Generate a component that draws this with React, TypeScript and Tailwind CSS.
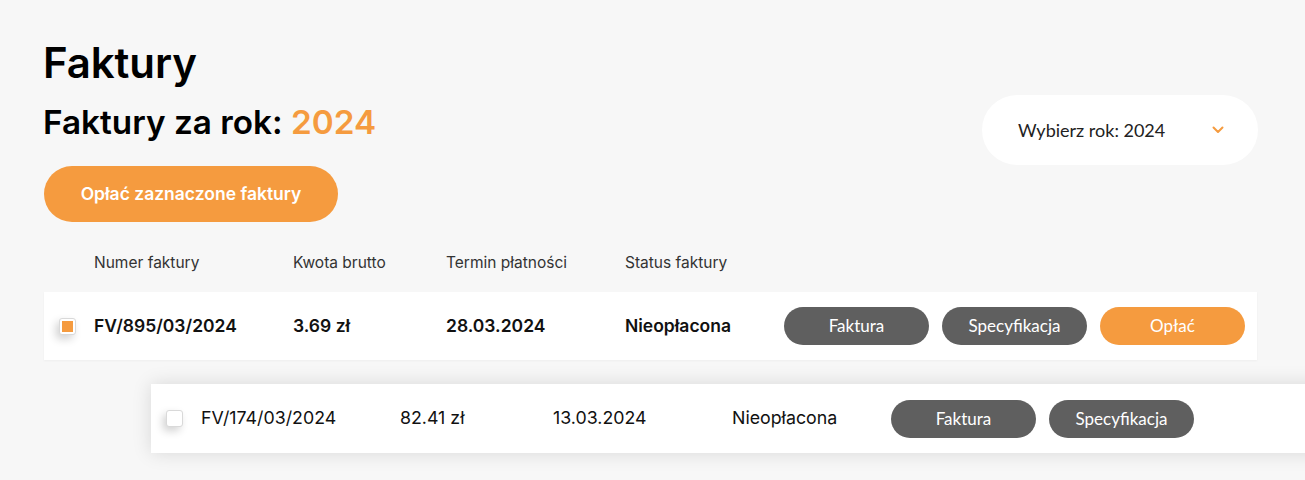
import React from "react";

const inter = { fontFamily: "Inter, 'Noto Sans', sans-serif" };

function Checkbox({ checked }: { checked: boolean }) {
  return (
    <div className="flex h-[17px] w-[17px] items-center justify-center rounded-[3px] border border-[#d9d9d9] bg-white shadow-[-3px_4px_8px_rgba(0,0,0,0.18)]">
      {checked && <div className="h-[11px] w-[11px] bg-[#f59b3f]" />}
    </div>
  );
}

function Btn({ label, orange }: { label: string; orange?: boolean }) {
  return (
    <div
      className={`flex h-[38px] w-[145px] items-center justify-center rounded-full text-[17px] font-normal text-white ${
        orange ? "bg-[#f59b3f]" : "bg-[#5f5f5f]"
      }`}
      style={{ fontFamily: "Lato, sans-serif" }}
    >
      {label}
    </div>
  );
}

function Row({
  checked,
  num,
  amount,
  date,
  status,
  bold,
  pay,
  className,
}: {
  checked: boolean;
  num: string;
  amount: string;
  date: string;
  status: string;
  bold?: boolean;
  pay?: boolean;
  className: string;
}) {
  return (
    <div className={`flex h-[68px] w-[1213px] shrink-0 items-center bg-white text-[#111] ${bold ? "text-[17.5px] font-semibold" : "text-[17.8px] font-normal"} ${className}`}>
      <div className="w-[50px] pl-[15px]">
        <Checkbox checked={checked} />
      </div>
      <div className="w-[199px]">{num}</div>
      <div className="w-[153px]">{amount}</div>
      <div className="w-[179px]">{date}</div>
      <div className="w-[159px]">{status}</div>
      <div className="flex gap-[13px]">
        <Btn label="Faktura" />
        <Btn label="Specyfikacja" />
        {pay && <Btn label="Opłać" orange />}
      </div>
    </div>
  );
}

export default function App() {
  return (
    <div className="h-[480px] w-full overflow-hidden bg-[#f7f7f7] pl-[44px] pt-[35px]" style={inter}>
      <div className="flex w-[1214px] justify-between">
        <div>
          <h1 className="-ml-px text-[42px] font-semibold leading-[56px] tracking-[-0.1px] text-black">Faktury</h1>
          <h2 className="-ml-px mt-[10px] text-[33.3px] font-semibold leading-[42px] text-black">
            Faktury za rok: <span className="text-[#f59b3f]">2024</span>
          </h2>
          <div className="mt-[23px] flex h-[56px] w-[294px] items-center justify-center rounded-full bg-[#f59b3f] text-[17.5px] font-semibold text-white">
            Opłać zaznaczone faktury
          </div>
        </div>
        <div
          className="mt-[60px] flex h-[70px] w-[276px] items-center justify-between rounded-full bg-white pl-[36px] pr-[34px] text-[18px] text-[#222]"
          style={{ fontFamily: "Lato, sans-serif" }}
        >
          <span>Wybierz rok: 2024</span>
          <svg width="12" height="8" viewBox="0 0 12 8" fill="none">
            <path d="M1.5 1.5L6 6L10.5 1.5" stroke="#f59b3f" strokeWidth="2" strokeLinecap="round" strokeLinejoin="round" />
          </svg>
        </div>
      </div>
      <div className="mt-[30px] flex h-[22px] items-center text-[15.5px] text-[#333]">
        <div className="w-[50px]" />
        <div className="w-[199px]">Numer faktury</div>
        <div className="w-[153px]">Kwota brutto</div>
        <div className="w-[179px]">Termin płatności</div>
        <div className="w-[159px]">Status faktury</div>
      </div>
      <div className="mt-[18px] flex flex-col">
        <Row
          checked
          bold
          pay
          num="FV/895/03/2024"
          amount="3.69 zł"
          date="28.03.2024"
          status="Nieopłacona"
          className="shadow-[0_1px_2px_rgba(0,0,0,0.04)]"
        />
        <Row
          checked={false}
          num="FV/174/03/2024"
          amount="82.41 zł"
          date="13.03.2024"
          status="Nieopłacona"
          className="ml-[107px] mt-[24px] h-[69px] shadow-[0_0_18px_rgba(0,0,0,0.13)]"
        />
      </div>
    </div>
  );
}
